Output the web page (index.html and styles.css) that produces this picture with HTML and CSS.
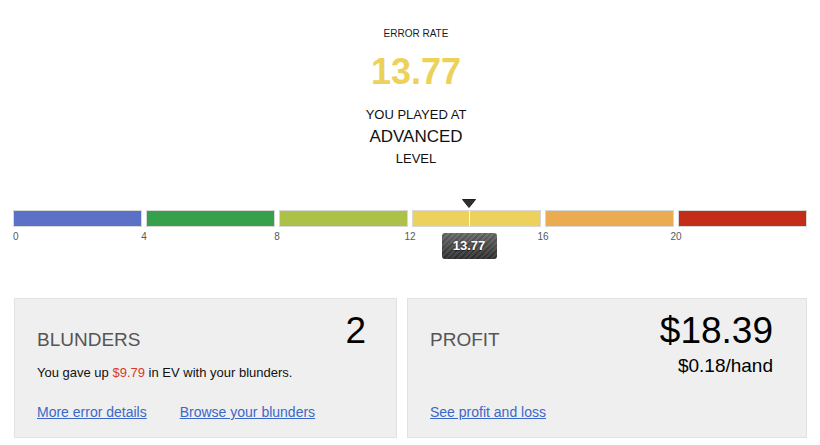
FILE: index.html
```html
<!DOCTYPE html>
<html lang="en">
<head>
<meta charset="utf-8">
<title>Error rate</title>
<link rel="stylesheet" href="styles.css">
</head>
<body>
<div class="page">
  <section class="summary">
    <div class="label-small">ERROR RATE</div>
    <div class="rate">13.77</div>
    <div class="played">YOU PLAYED AT</div>
    <div class="level-name">ADVANCED</div>
    <div class="level">LEVEL</div>
  </section>

  <section class="gauge">
    <div class="bar">
      <div class="seg seg-blue"></div>
      <div class="seg seg-green"></div>
      <div class="seg seg-lime"></div>
      <div class="seg seg-yellow"></div>
      <div class="seg seg-orange"></div>
      <div class="seg seg-red"></div>
      <div class="marker" style="left: 57.375%;">
        <svg class="marker-arrow" width="14" height="9" viewBox="0 0 14 9"><path d="M0.5 0.5 H13.5 L7 8.5 Z" fill="#2f2f2f" stroke="#1e1e1e" stroke-width="1" stroke-linejoin="round"/></svg>
        <div class="marker-line"></div>
        <div class="badge">13.77</div>
      </div>
    </div>
    <div class="ticks">
      <div class="tick first"><span>0</span></div>
      <div class="tick"><span>4</span></div>
      <div class="tick"><span>8</span></div>
      <div class="tick"><span>12</span></div>
      <div class="tick"><span>16</span></div>
      <div class="tick"><span>20</span></div>
    </div>
  </section>

  <section class="cards">
    <div class="card card-blunders">
      <div class="card-head">
        <div class="card-title">BLUNDERS</div>
        <div class="card-value">
          <div class="big">2</div>
        </div>
      </div>
      <p class="card-text">You gave up <span class="loss">$9.79</span> in EV with your blunders.</p>
      <div class="card-links">
        <a href="#">More error details</a>
        <a href="#">Browse your blunders</a>
      </div>
    </div>
    <div class="card">
      <div class="card-head">
        <div class="card-title">PROFIT</div>
        <div class="card-value">
          <div class="big">$18.39</div>
          <div class="sub">$0.18/hand</div>
        </div>
      </div>
      <div class="card-links">
        <a href="#">See profit and loss</a>
      </div>
    </div>
  </section>
</div>
</body>
</html>
```

FILE: styles.css
```css
* { box-sizing: border-box; }

html, body {
  margin: 0;
  padding: 0;
  background: #ffffff;
}

body {
  font-family: "Liberation Sans", Arial, sans-serif;
  color: #111;
}

.page {
  width: 820px;
  padding: 28px 13px 0 13px;
}

.summary {
  display: flex;
  flex-direction: column;
  align-items: center;
  text-align: center;
  padding-left: 12px;
}

.label-small {
  font-size: 10px;
  line-height: 12px;
  color: #1a1a1a;
}

.rate {
  margin-top: 14px;
  font-size: 36px;
  line-height: 36px;
  font-weight: bold;
  color: #ecd15a;
}

.played {
  margin-top: 17px;
  font-size: 13px;
  line-height: 15px;
}

.level-name {
  margin-top: 5px;
  font-size: 17px;
  line-height: 20px;
}

.level {
  margin-top: 4px;
  font-size: 13px;
  line-height: 15px;
}

.gauge {
  margin-top: 44px;
}

.bar {
  position: relative;
  display: flex;
  gap: 4px;
  height: 17px;
}

.seg {
  flex: 1;
  border: 1px solid #d8d8d8;
}

.seg-blue { background: #5b70c6; }
.seg-green { background: #37a04b; }
.seg-lime { background: #abc148; }
.seg-yellow { background: #ecd25c; }
.seg-orange { background: #ebab50; }
.seg-red { background: #c42e18; }

.marker {
  position: absolute;
  top: 0;
  width: 0;
  height: 17px;
}

.marker-arrow {
  position: absolute;
  top: -11px;
  left: -7px;
  display: block;
}

.marker-line {
  position: absolute;
  top: 1px;
  left: 0;
  width: 1px;
  height: 15px;
  background: #ffffff;
}

.badge {
  position: absolute;
  top: 23px;
  left: -27px;
  width: 55px;
  height: 26px;
  border-radius: 3px;
  background:
    repeating-linear-gradient(135deg, rgba(255,255,255,0.08) 0 2px, rgba(0,0,0,0.08) 2px 4px),
    linear-gradient(#6a6a6a, #2e2e2e);
  color: #ffffff;
  font-size: 13px;
  font-weight: bold;
  line-height: 26px;
  text-align: center;
  text-shadow: 0 1px 1px rgba(0,0,0,0.6);
}

.ticks {
  display: flex;
  gap: 4px;
  margin-top: 4px;
}

.tick {
  flex: 1;
  font-size: 10px;
  line-height: 12px;
  color: #555a60;
}

.tick span {
  display: inline-block;
  transform: translateX(calc(-50% - 2px));
}

.tick.first span {
  transform: none;
}

.cards {
  display: grid;
  grid-template-columns: 383px 400px;
  gap: 10px;
  margin-top: 55px;
  margin-left: 1px;
}

.card {
  display: flex;
  flex-direction: column;
  height: 140px;
  padding: 14px 33px 17px 22px;
  background: #efefef;
  border: 1px solid #e2e2e2;
}

.card-blunders {
  padding-right: 30px;
}

.card-head {
  display: flex;
  justify-content: space-between;
  align-items: flex-start;
}

.card-title {
  padding-top: 17px;
  font-size: 19px;
  line-height: 19px;
  color: #555555;
}

.card-value {
  text-align: right;
}

.big {
  font-size: 37px;
  line-height: 36px;
  color: #000;
}

.sub {
  margin-top: 7px;
  font-size: 19px;
  line-height: 19px;
  color: #000;
}

.card-text {
  margin: 16px 0 0 0;
  font-size: 13px;
  line-height: 15px;
  color: #111;
}

.loss {
  color: #d63a2c;
}

.card-links {
  margin-top: auto;
  display: flex;
  gap: 33px;
  font-size: 14px;
  line-height: 16px;
}

.card-links a {
  color: #3b68c8;
  text-decoration: underline;
}
```
